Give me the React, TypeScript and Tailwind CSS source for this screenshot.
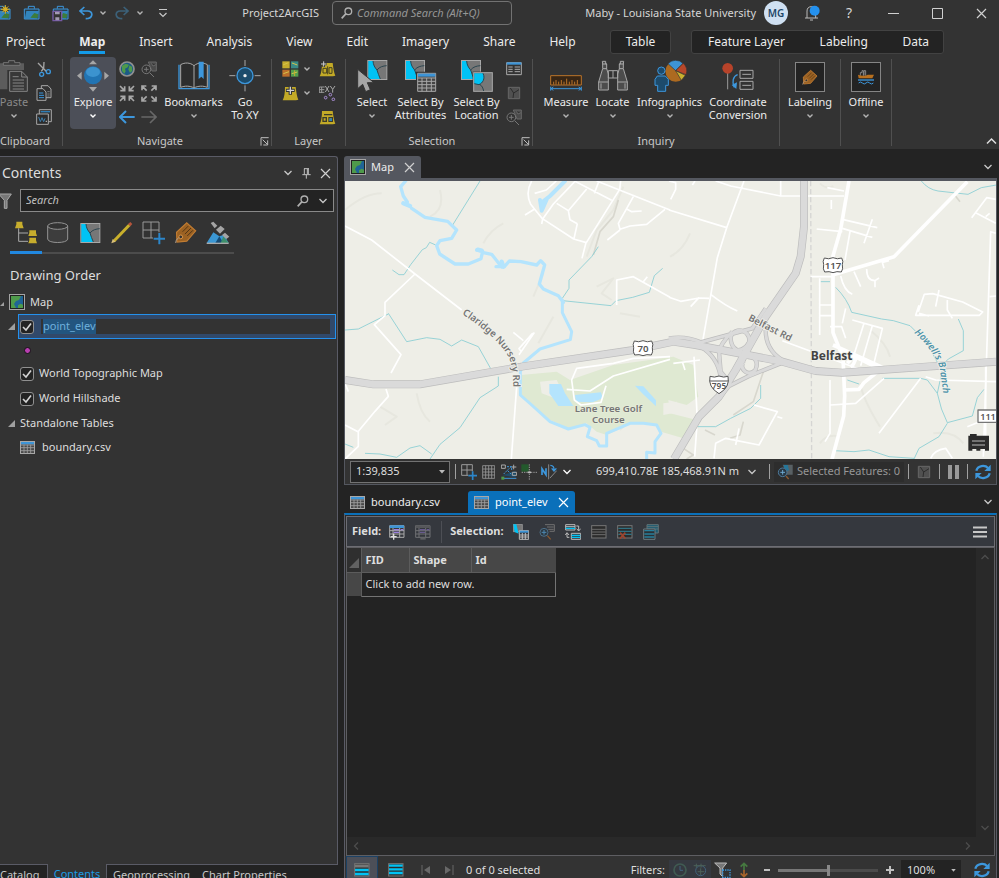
import { useEffect, useRef, type ReactNode } from "react";

type IconProps = { w: number; h: number; v: string; children: ReactNode; className?: string };

const Svg = ({ w, h, v, children, className = "" }: IconProps) => (
  <svg width={w} height={h} viewBox={v} fill="none" aria-hidden="true" className={"shrink-0 " + className}>
    {children}
  </svg>
);

const Chevron = ({ color = "#b4b4b4" }: { color?: string }) => (
  <Svg w={8} h={8} v="0 0 8 8">
    <path d="M1.5 2.5 4 5l2.5-2.5" stroke={color} strokeWidth="1.4" />
  </Svg>
);

const WideChevron = ({ color = "#c8c8c8" }: { color?: string }) => (
  <Svg w={10} h={10} v="0 0 10 10">
    <path d="m1.5 3 3.5 3.5L8.500 3" stroke={color} strokeWidth="1.3" />
  </Svg>
);

const Cross = ({ size = 11, color = "#d0d0d0" }: { size?: number; color?: string }) => (
  <Svg w={size} h={size} v="0 0 11 11">
    <path d="m1 1 9 9M10 1 1 10" stroke={color} strokeWidth="1.2" />
  </Svg>
);

const Magnifier = () => (
  <Svg w={12} h={12} v="0 0 36 36">
    <circle cx="22" cy="13" r="10" stroke="#b0b0b0" strokeWidth="4" />
    <path d="M15 20 2 34" stroke="#b0b0b0" strokeWidth="5" />
  </Svg>
);

const MapThumb = () => (
  <Svg w={16} h={16} v="0 0 48 48">
    <rect x="1.500" y="1.500" width="45" height="45" fill="#202020" stroke="#a5a5a5" strokeWidth="3" />
    <path d="M6 6h36v36H6z" fill="#1f6496" />
    <path d="M6 6h30l-6 12-9 3-6 9 6 12H6zM27 34l8-5 7 3v10H27z" fill="#4e9a4b" />
  </Svg>
);

const TableIcon = () => (
  <Svg w={15} h={13} v="0 0 45 39">
    <rect x="1.500" y="1.500" width="42" height="36" fill="#4a4a4a" stroke="#a8a8a8" strokeWidth="3" />
    <path d="M3 3h39v7H3z" fill="#3d94d6" />
    <path d="M3 12h39M3 20h39M3 29h39M12 11v26M22 11v26M32 11v26" stroke="#a0a0a0" strokeWidth="2.500" />
  </Svg>
);

const Refresh = () => (
  <Svg w={16} h={16} v="0 0 48 48">
    <path d="M4 20C8 4 30 2 39 12M44 28C40 44 18 46 9 36" stroke="#3d97dc" strokeWidth="7" />
    <path d="M47 2v19H28zM1 46V27h19z" fill="#3d97dc" />
  </Svg>
);

const SelectTile = () => (
  <>
    <rect x="1.500" y="1.500" width="57" height="57" fill="#777" stroke="#a8a8a8" strokeWidth="3" />
    <path d="M3 3h14c1 12 5 19 12 27 3 10 6 17 10 27H3z" fill="#00c3f5" />
    <path d="M17 3c1 12 5 19 12 27 3 10 6 17 10 27M29 30c8-10 18-12 29-13" stroke="#2c4650" strokeWidth="3" />
  </>
);

const RibbonPaste = () => (
  <Svg w={28} h={32} v="0 0 84 96">
    <path d="M0 10h72v20H0zM0 30h22v58H0z" fill="#5c5c5c" />
    <path d="M10 16V8h16V2h18v6h16v8z" fill="#3a3a3a" stroke="#757575" strokeWidth="3" />
    <path d="M29 34h36l17 17v43H29z" fill="#383838" stroke="#858585" strokeWidth="3" />
    <path d="M65 34v17h17M38 50h18M38 60h34M38 69h34M38 78h34M38 87h34" stroke="#858585" strokeWidth="3" />
  </Svg>
);

const Scissors = () => (
  <Svg w={16} h={16} v="0 0 48 48">
    <path d="m6 6 26 26M24 3l-1 18-7 10" stroke="#a5a5a5" strokeWidth="4" />
    <circle cx="37" cy="32" r="6" stroke="#3d97dc" strokeWidth="4" />
    <circle cx="17" cy="40" r="6" stroke="#3d97dc" strokeWidth="4" />
  </Svg>
);

const CopyIcon = () => (
  <Svg w={16} h={16} v="0 0 48 48">
    <path d="M16 2h20l9 10v26H16z" stroke="#a8a8a8" strokeWidth="3" />
    <path d="M3 11h18l9 10v25H3z" fill="#2c2c2c" stroke="#a8a8a8" strokeWidth="3" />
    <path d="M9 24h13M9 31h15M9 38h15" stroke="#3d97dc" strokeWidth="3" />
    <path d="M34 20h7M34 27h7M34 33h7" stroke="#a8a8a8" strokeWidth="2" />
  </Svg>
);

const CopyPath = () => (
  <Svg w={16} h={16} v="0 0 48 48">
    <path d="M10 2h36v36H10z" fill="#333" stroke="#a8a8a8" strokeWidth="3" />
    <path d="M14 8h28" stroke="#2d7eb8" strokeWidth="4" />
    <path d="M2 15h35v31H2z" fill="#2b2b2b" stroke="#a8a8a8" strokeWidth="3" />
    <path d="m8 24 5 14 5-12 5 12 4-10" stroke="#3d7fae" strokeWidth="3" />
    <path d="M29 37h4" stroke="#aaa" strokeWidth="4" />
  </Svg>
);

const ExploreIcon = () => (
  <Svg w={32} h={32} v="0 0 96 96">
    <circle cx="48" cy="46" r="27" fill="#2174b3" />
    <ellipse cx="48" cy="36" rx="21" ry="15" fill="#3c93cf" />
    <path d="M48 1 60 13H36zM48 95 36 81h24zM0 47l14-12v24zM96 47 82 35v24z" fill="#a6a6a6" />
  </Svg>
);

const Globe = () => (
  <Svg w={16} h={16} v="0 0 48 48">
    <circle cx="24" cy="24" r="21" fill="#1c5b86" stroke="#909090" strokeWidth="5" />
    <path d="M9 14 20 8l10 3-4 8-8 4 2 8-4 7-7-8zM31 13l8 4 1 13-7 5-5-9z" fill="#4e9a4b" />
  </Svg>
);

const ZoomSelection = () => (
  <Svg w={16} h={16} v="0 0 48 48">
    <path d="M22 3h24v27H33zM31 7l5 8 9-4" fill="#4b4b4b" stroke="#686868" strokeWidth="3" />
    <circle cx="16" cy="25" r="13" fill="#333" stroke="#777" strokeWidth="3" />
    <path d="M16 18v14M9 25h14M26 35l13 13" stroke="#777" strokeWidth="3" />
  </Svg>
);

const Corners = ({ out = false }: { out?: boolean }) => (
  <Svg w={16} h={17} v="0 0 48 51">
    {out ? (
      <path d="M3 16V3h13M4 4l13 13M45 16V3H32M44 4 31 17M3 35v13h13M4 47l13-13M45 35v13H32M44 47 31 34" stroke="#a8a8a8" strokeWidth="5" />
    ) : (
      <path d="M17 4v13H4M16 16 3 3M31 4v13h13M32 16 45 3M17 47V34H4M16 35 3 48M31 47V34h13M32 35l13 13" stroke="#a8a8a8" strokeWidth="5" />
    )}
  </Svg>
);

const Arrow = ({ right = false }: { right?: boolean }) => (
  <Svg w={16} h={16} v="0 0 48 48">
    {right ? (
      <path d="M1 24h44M27 6l18 18-18 18" stroke="#686868" strokeWidth="5" />
    ) : (
      <path d="M47 24H3M21 6 3 24l18 18" stroke="#3d97dc" strokeWidth="6" />
    )}
  </Svg>
);

const BookmarksIcon = () => (
  <Svg w={32} h={32} v="0 0 96 96">
    <path d="M3 14v72h90V14" stroke="#3d97dc" strokeWidth="4" />
    <path d="M8 14C20 7 36 7 48 17c12-10 28-10 40-3v68c-12-5-28-5-40 2-12-7-28-7-40-2zM48 17v66" fill="#2d2d2d" stroke="#aaa" strokeWidth="3" />
    <path d="M62 5h15v52l-7-7-8 7z" fill="#3d97dc" />
  </Svg>
);

const GoToIcon = () => (
  <Svg w={32} h={32} v="0 0 96 96">
    <circle cx="48" cy="47" r="24" fill="#1c4c6c" stroke="#3d97dc" strokeWidth="4" />
    <path d="M48 0v18M48 76v18M1 47h18M77 47h18" stroke="#a8a8a8" strokeWidth="3" />
    <circle cx="48" cy="47" r="5" fill="#eee" />
  </Svg>
);

const Basemap = () => (
  <Svg w={17} h={16} v="0 0 51 48">
    <path d="M1 1h22v21H1z" fill="#c7ad2d" />
    <path d="M27 1h22v21H27z" fill="#3b8b87" />
    <path d="M1 26h22v21H1z" fill="#bd6f2b" />
    <path d="M27 26h22v21H27z" fill="#539e4d" />
    <path d="m3 12 16-7M30 6l16 6M4 38l17-6M29 38l17-5" stroke="#d4c34c" strokeWidth="3" />
    <path d="M38 28v17" stroke="#c7ad2d" strokeWidth="3" />
  </Svg>
);

const YellowLayer = ({ kind }: { kind: "add" | "text" | "plain" }) => (
  <Svg w={17} h={16} v="0 0 51 48">
    <path d="M9 6h32c2 16 4 29 8 38L42 46H2C7 36 9 23 9 6z" fill="#c3aa27" />
    {kind === "add" && <path d="M25 3v26M12 16h26" stroke="#333" strokeWidth="10" />}
    {kind === "add" && <path d="M25 5v22M14 16h22" stroke="#d0d0d0" strokeWidth="4" />}
    {kind === "text" && <path d="M14 0v18M5 9h18" stroke="#333" strokeWidth="8" />}
    {kind === "text" && <path d="M14 1v16M6 9h16" stroke="#d0d0d0" strokeWidth="3" />}
    {kind === "text" && <path d="M12 22h11v14H12zM30 20h9v17h-9zM26 16v24" stroke="#45401f" strokeWidth="3" />}
    {kind === "plain" && <path d="M15 17h25M12 26h10v11H12zM30 26h10v11H30z" stroke="#3b3b2a" strokeWidth="4" />}
    {kind === "plain" && <path d="M31 28h8v8h-8z" fill="#2e83bc" />}
  </Svg>
);

const XYIcon = () => (
  <Svg w={17} h={16} v="0 0 51 48">
    <path d="M1 6h16M1 14h15M1 22h15M1 6v18M8 6v18" stroke="#989898" strokeWidth="3" />
    <path d="m19 3 11 18M30 3 19 21M34 3l7 10 7-10M41 13v10" stroke="#a8a8a8" strokeWidth="3" />
    <circle cx="20" cy="38" r="4" stroke="#a98dd4" strokeWidth="3" />
    <circle cx="34" cy="29" r="4" stroke="#a98dd4" strokeWidth="3" />
    <circle cx="43" cy="43" r="4" stroke="#a98dd4" strokeWidth="3" />
  </Svg>
);

const SelectIcon = () => (
  <Svg w={32} h={32} v="0 0 96 96">
    <g transform="translate(34 0)"><SelectTile /></g>
    <path d="M5 28v58l15-13 9 22 14-6-9-21h20z" fill="#a5a5a5" stroke="#333" strokeWidth="3" />
  </Svg>
);

const SelectAttributes = () => (
  <Svg w={32} h={32} v="0 0 96 96">
    <SelectTile />
    <path d="M36 38h58v58H36z" fill="#333" stroke="#333" strokeWidth="6" />
    <path d="M38 40h54v54H38zM38 54h54M38 64h54M38 74h54M38 84h54M51 54v40M65 54v40M79 54v40" fill="#444" stroke="#a8a8a8" strokeWidth="3" />
    <path d="M39 41h52v9H39z" fill="#3d94d6" />
  </Svg>
);

const SelectLocation = () => (
  <Svg w={32} h={32} v="0 0 96 96">
    <SelectTile />
    <rect x="35" y="35" width="61" height="61" fill="#333" />
    <rect x="38" y="38" width="56" height="56" fill="#777" stroke="#a8a8a8" strokeWidth="3" />
    <path d="M40 40h26c8 16-2 30-12 34l-14-3z" fill="#00c3f5" />
    <path d="M66 40c8 16-2 30-12 34l-14-3M56 73c7 4 10 11 12 20" stroke="#2c4650" strokeWidth="3" />
  </Svg>
);

const AttributeList = () => (
  <Svg w={16} h={16} v="0 0 48 48">
    <path d="M2 5h44v36H2z" stroke="#aaa" strokeWidth="3" />
    <path d="M2 4h44v7H2z" fill="#3d94d6" />
    <path d="M7 18h13M7 25h13M7 32h13M26 18h16M26 25h16M26 32h16" stroke="#aaa" strokeWidth="3" />
  </Svg>
);

const ClearTile = () => (
  <Svg w={16} h={16} v="0 0 48 48">
    <path d="M7 7h34v34H7z" fill="#505050" stroke="#666" strokeWidth="3" />
    <path d="m13 9 10 15 16-10M23 24l-2 15" stroke="#2c2c2c" strokeWidth="3" />
  </Svg>
);

const MeasureIcon = () => (
  <Svg w={32} h={32} v="0 0 96 96">
    <path d="M2 47h92v28H2z" fill="#382615" stroke="#b9732a" strokeWidth="3" />
    <path d="M11 74v-9M18 74V60M26 74v-9M34 74V60M42 74v-9M50 74V56M58 74v-9M66 74V60M74 74v-9M82 74V60" stroke="#b9732a" strokeWidth="3" />
    <path d="M2 80v12M94 80v12M3 86h90M3 86l7-5M3 86l7 5M93 86l-7-5M93 86l-7 5" stroke="#3d97dc" strokeWidth="3" />
  </Svg>
);

const Binoculars = () => (
  <Svg w={32} h={32} v="0 0 96 96">
    <path d="M16 4h10v8h3v14l5 16v48H5V66l12-40V12zM80 4H70v8h-3v14l-5 16v48h29V66L79 26V12z" fill="#4c4c4c" stroke="#a8a8a8" strokeWidth="3" />
    <path d="M16 12h14M18 26h12M66 12h14M66 26h12M5 66h29M62 66h29M34 32h28v22H34zM48 32v22M12 70v16M84 70v16" stroke="#a8a8a8" strokeWidth="3" />
  </Svg>
);

const Infographics = () => (
  <Svg w={34} h={32} v="0 0 102 96">
    <circle cx="68" cy="34" r="31" fill="#ad6a20" />
    <path d="M68 32 45 11A31 31 0 0 1 90 10z" fill="#3d94d6" stroke="#333" strokeWidth="2" />
    <path d="M68 32 91 10a31 31 0 0 1 8 34z" fill="#b7472a" stroke="#333" strokeWidth="2" />
    <path d="m68 32 29 14-12 15z" fill="#c8b02f" stroke="#333" strokeWidth="2" />
    <circle cx="25" cy="32" r="11" fill="#1d4b6c" stroke="#3d97dc" strokeWidth="3" />
    <path d="M13 48h24l9 10v18h-8v18H14V76H6V58z" fill="#1d4b6c" stroke="#3d97dc" strokeWidth="3" />
  </Svg>
);

const Coordinate = () => (
  <Svg w={32} h={32} v="0 0 96 96">
    <path d="M17 30v58" stroke="#999" strokeWidth="3" />
    <circle cx="17" cy="25" r="16" fill="#b7432a" />
    <path d="M47 44C33 48 29 66 37 82" stroke="#3d97dc" strokeWidth="4" />
    <path d="m29 75 14 12 2-20z" fill="#3d97dc" />
    <path d="M54 31h39v24H54zM54 64h39v24H54zM61 43h26M61 76h26" stroke="#a8a8a8" strokeWidth="3" />
  </Svg>
);

const Tag = () => (
  <>
    <path d="M26 4 45 21 26 43 5 45 4 24z" fill="#9c6223" stroke="#c17c32" strokeWidth="2.500" />
    <path d="m17 23 12-12M22 28l13-13M27 32l12-12" stroke="#4d3314" strokeWidth="2" />
    <path d="M2 47c1-8 5-11 10-12" stroke="#b0a090" strokeWidth="2" />
    <circle cx="13" cy="34" r="4" fill="#333" stroke="#e0994a" strokeWidth="2" />
  </>
);

const BoxedIcon = ({ children }: { children: ReactNode }) => (
  <span className="mt-0.5 flex h-[30px] w-[30px] shrink-0 items-center justify-center border border-[#858585] bg-[#232323]">
    <Svg w={16} h={16} v="0 0 48 48">{children}</Svg>
  </span>
);

type BigButtonProps = { icon: ReactNode; lines: string[]; width: string; menu?: boolean; active?: boolean; dim?: boolean };

const BigButton = ({ icon, lines, width, menu = false, active = false, dim = false }: BigButtonProps) => (
  <button
    type="button"
    className={
      "flex h-[72px] shrink-0 flex-col items-center rounded-sm pt-[3px] text-[11px] leading-[13px] whitespace-nowrap " +
      width + (active ? " bg-[#4c4f58]" : "") + (dim ? " text-[#8a8a8a]" : " text-[#ececec]")
    }
  >
    <span className="mb-[3px] flex h-8 shrink-0 items-start justify-center">{icon}</span>
    {lines.map((line) => (
      <span key={line}>{line}</span>
    ))}
    {menu && <span className="mt-1"><Chevron color={active ? "#fff" : "#b4b4b4"} /></span>}
  </button>
);

const SmallButton = ({ label, children }: { label: string; children: ReactNode }) => (
  <button type="button" aria-label={label} className="flex h-6 shrink-0 items-center gap-1">{children}</button>
);

const Group = ({ label, className, launcher = false, children }: { label: string; className: string; launcher?: boolean; children: ReactNode }) => (
  <section aria-label={label} className={"flex shrink-0 flex-col " + className}>
    <div className="flex h-[72px] items-start">{children}</div>
    <div className="mt-1 flex h-4 items-center text-[11px] leading-4 text-[#c8c8c8]">
      <span className="flex-1 text-center">{label}</span>
      {launcher && (
        <button type="button" aria-label={label + " options"} className="flex w-[14px] justify-end pr-0.5">
          <Svg w={9} h={9} v="0 0 27 27">
            <path d="M3 26V2h23M8 8l14 14M23 10v14H10" stroke="#bdbdbd" strokeWidth="3" />
          </Svg>
        </button>
      )}
    </div>
  </section>
);

const Divider = () => <span className="mt-0.5 h-[87px] w-px shrink-0 bg-[#505050]" />;

const Briefcase = ({ kind }: { kind: "new" | "open" | "save" }) => (
  <Svg w={17} h={17} v="0 0 51 51">
    <path d="M16 11V4h18v7" stroke="#3d97dc" strokeWidth="3" />
    <path d="M4 12h44v30H4z" fill="#263f50" stroke="#3d97dc" strokeWidth="3" />
    <path d="M10 18h38l-6 24H5z" fill="#3285bd" />
    <path d="m22 38 12-14 12 4-3 12z" fill="#3d7c3a" />
    {kind === "new" && <circle cx="34" cy="13" r="8" fill="#d5b02b" stroke="#3b2c10" strokeWidth="2" />}
    {kind === "new" && <path d="M34 0v26M21 13h26M25 4l18 18M43 4 25 22" stroke="#d5b02b" strokeWidth="3" />}
    {kind === "save" && <path d="M3 19h26v28H3z" fill="#333" stroke="#7559a3" strokeWidth="4" />}
    {kind === "save" && <path d="M9 20h14v8H9zM10 37h12v9H10z" fill="#a29ab3" />}
  </Svg>
);

const Undo = ({ redo = false }: { redo?: boolean }) => (
  <Svg w={14} h={14} v="0 0 42 42" className={redo ? "-scale-x-100" : ""}>
    <path d="M4 15h22c17 0 18 23-6 23M16 3 3 15l13 12" stroke={redo ? "#3c6179" : "#3d97dc"} strokeWidth="5" />
  </Svg>
);

const TitleBar = () => (
  <header className="flex h-7 shrink-0 items-start text-[11px] text-[#d6d6d6]">
    <div className="flex h-[26px] w-[332px] shrink-0 items-center">
      <span className="flex w-[11px] shrink-0 justify-end overflow-hidden"><Briefcase kind="new" /></span>
      <button type="button" aria-label="Open project" className="ml-3"><Briefcase kind="open" /></button>
      <button type="button" aria-label="Save project" className="ml-3"><Briefcase kind="save" /></button>
      <button type="button" aria-label="Undo" className="ml-[10px]"><Undo /></button>
      <button type="button" aria-label="Undo history" className="ml-[6px]"><Chevron /></button>
      <button type="button" aria-label="Redo" className="ml-2"><Undo redo /></button>
      <button type="button" aria-label="Redo history" className="ml-[7px]"><Chevron /></button>
      <button type="button" aria-label="Customize toolbar" className="ml-[14px]">
        <Svg w={10} h={10} v="0 0 10 10"><path d="M1 1.500h8M1.500 5 5 8.500 8.500 5" stroke="#c8c8c8" strokeWidth="1.200" /></Svg>
      </button>
      <h1 className="flex-1 pr-[13px] text-right">Project2ArcGIS</h1>
    </div>
    <label className="mt-px flex h-6 w-[180px] shrink-0 items-center gap-1 rounded-sm border border-[#727272] px-2">
      <Magnifier />
      <input aria-label="Command search" placeholder="Command Search (Alt+Q)" className="w-full bg-transparent text-[11px] italic outline-none placeholder:text-[#969696]" />
    </label>
    <div className="flex h-[26px] flex-1 items-center justify-end">
      <span className="whitespace-nowrap">Maby - Louisiana State University</span>
      <button type="button" aria-label="Account" className="ml-2 h-6 w-6 shrink-0 rounded-full bg-[#cfe0f2] text-[10px] font-semibold text-[#1c4568]">MG</button>
      <button type="button" aria-label="Notifications" className="ml-4">
        <Svg w={16} h={16} v="0 0 48 48">
          <path d="M3 39h39M9 39V18c0-8 5-13 13-13s13 5 13 13v21M18 45h9" stroke="#bbb" strokeWidth="3" />
          <circle cx="32" cy="17" r="15" fill="#2491ee" />
        </Svg>
      </button>
      <button type="button" aria-label="Help" className="ml-[22px] w-[14px] text-sm">?</button>
      <button type="button" aria-label="Minimize" className="ml-8"><Svg w={11} h={11} v="0 0 11 11"><path d="M0 5.500h11" stroke="#d0d0d0" /></Svg></button>
      <button type="button" aria-label="Maximize" className="ml-[33px]"><Svg w={11} h={11} v="0 0 11 11"><path d="M.5.500h10v10H.5z" stroke="#d0d0d0" /></Svg></button>
      <button type="button" aria-label="Close" className="mr-3 ml-[33px]"><Cross /></button>
    </div>
  </header>
);

const mainTabs = ["Project", "Map", "Insert", "Analysis", "View", "Edit", "Imagery", "Share", "Help"];

const RibbonTabs = () => (
  <nav className="flex h-7 shrink-0 items-center pl-[6px] text-xs text-[#ececec]">
    <div className="flex w-[604px] shrink-0 gap-[34px]">
      {mainTabs.map((t) =>
        t === "Map" ? (
          <button key={t} type="button" className="h-[23px] border-b-[3px] border-[#149be8] pt-0.5 font-bold">{t}</button>
        ) : (
          <button key={t} type="button" className="h-[23px]">{t}</button>
        )
      )}
    </div>
    <div className="flex h-6 w-[61px] shrink-0 items-center justify-center rounded-[3px] border border-[#424242] bg-[#232323]">
      <button type="button">Table</button>
    </div>
    <div className="ml-5 flex h-6 w-[253px] shrink-0 items-center justify-between rounded-[3px] border border-[#424242] bg-[#232323] pr-[14px] pl-4">
      <button type="button">Feature Layer</button>
      <button type="button">Labeling</button>
      <button type="button">Data</button>
    </div>
  </nav>
);

const Ribbon = () => (
  <div className="flex h-[93px] shrink-0 pt-px">
    <Group label="Clipboard" className="w-[50px]">
      <BigButton icon={<RibbonPaste />} lines={["Paste"]} width="w-7" menu dim />
      <div className="ml-2 flex flex-col">
        <SmallButton label="Cut"><Scissors /></SmallButton>
        <SmallButton label="Copy"><CopyIcon /></SmallButton>
        <SmallButton label="Copy path"><CopyPath /></SmallButton>
      </div>
    </Group>
    <span className="w-3 shrink-0" />
    <Divider />
    <Group label="Navigate" className="w-[208px]" launcher>
      <span className="w-[7px]" />
      <BigButton icon={<ExploreIcon />} lines={["Explore"]} width="w-[46px]" menu active />
      <div className="ml-[3px] grid grid-cols-2 gap-x-1.5">
        <SmallButton label="Full extent"><Globe /></SmallButton>
        <SmallButton label="Zoom to selection"><ZoomSelection /></SmallButton>
        <SmallButton label="Fixed zoom in"><Corners /></SmallButton>
        <SmallButton label="Fixed zoom out"><Corners out /></SmallButton>
        <SmallButton label="Previous extent"><Arrow /></SmallButton>
        <SmallButton label="Next extent"><Arrow right /></SmallButton>
      </div>
      <span className="w-1" />
      <BigButton icon={<BookmarksIcon />} lines={["Bookmarks"]} width="w-[65px]" menu />
      <BigButton icon={<GoToIcon />} lines={["Go", "To XY"]} width="w-[38px]" />
    </Group>
    <Divider />
    <Group label="Layer" className="w-[73px]">
      <div className="ml-[10px] flex flex-col">
        <SmallButton label="Basemap"><Basemap /><Chevron /></SmallButton>
        <SmallButton label="Add data"><YellowLayer kind="add" /><Chevron /></SmallButton>
      </div>
      <div className="ml-2 flex flex-col">
        <SmallButton label="Add graphics layer"><YellowLayer kind="text" /></SmallButton>
        <SmallButton label="Add XY data"><XYIcon /></SmallButton>
        <SmallButton label="Add preset"><YellowLayer kind="plain" /></SmallButton>
      </div>
    </Group>
    <Divider />
    <Group label="Selection" className="w-[186px]" launcher>
      <span className="w-1" />
      <BigButton icon={<SelectIcon />} lines={["Select"]} width="w-11" menu />
      <BigButton icon={<SelectAttributes />} lines={["Select By", "Attributes"]} width="w-[53px]" />
      <BigButton icon={<SelectLocation />} lines={["Select By", "Location"]} width="w-[59px]" />
      <div className="flex flex-col">
        <SmallButton label="Attributes"><AttributeList /></SmallButton>
        <SmallButton label="Clear"><ClearTile /></SmallButton>
        <SmallButton label="Zoom to selected"><ZoomSelection /></SmallButton>
      </div>
    </Group>
    <Divider />
    <Group label="Inquiry" className="w-[246px]">
      <span className="w-[10px]" />
      <BigButton icon={<MeasureIcon />} lines={["Measure"]} width="w-[46px]" menu />
      <BigButton icon={<Binoculars />} lines={["Locate"]} width="w-[47px]" menu />
      <BigButton icon={<Infographics />} lines={["Infographics"]} width="w-[67px]" menu />
      <BigButton icon={<Coordinate />} lines={["Coordinate", "Conversion"]} width="w-[70px]" />
    </Group>
    <Divider />
    <div className="flex w-[60px] shrink-0 justify-center">
      <BigButton icon={<BoxedIcon><Tag /></BoxedIcon>} lines={["Labeling"]} width="w-[48px]" menu />
    </div>
    <Divider />
    <div className="flex w-[50px] shrink-0 justify-center">
      <BigButton
        icon={
          <BoxedIcon>
            <path d="M7 20v-9h5V5h4v15M18 20V5h5v15" stroke="#999" strokeWidth="2.500" />
            <path d="M0 17c10 4 22 4 29 0h19l-5 11H2z" fill="#b8701f" />
            <path d="M0 33h48" stroke="#3d97dc" strokeWidth="4" />
            <path d="M2 42q5-6 11 0t11 0 11 0 11 0" stroke="#3d97dc" strokeWidth="3" />
          </BoxedIcon>
        }
        lines={["Offline"]}
        width="w-[44px]"
        menu
      />
    </div>
    <Divider />
    <button type="button" aria-label="Collapse ribbon" className="mt-auto mr-0.5 mb-0.5 ml-auto">
      <Svg w={11} h={11} v="0 0 11 11"><path d="M1 7.500 5.500 3 10 7.500" stroke="#ddd" strokeWidth="1.500" /></Svg>
    </button>
  </div>
);

const contentTools: { label: string; icon: ReactNode }[] = [
  {
    label: "List by drawing order",
    icon: (
      <>
        <path d="M7 2h18v8l4 12H3l4-12zM46 28h20v8l3 9H43l3-9zM46 50h20v8l3 9H43l3-9z" fill="#c7ad2d" />
        <path d="M14 22v39h28M14 36h28" stroke="#aaa" strokeWidth="3" />
      </>
    ),
  },
  {
    label: "List by data source",
    icon: (
      <>
        <path d="M5 15v39c0 14 60 14 60 0V15" fill="#3d3d3d" stroke="#939393" strokeWidth="3" />
        <ellipse cx="35" cy="15" rx="30" ry="10" fill="#333" stroke="#939393" strokeWidth="3" />
      </>
    ),
  },
  { label: "List by selection", icon: <g transform="translate(7 6)"><SelectTile /></g> },
  {
    label: "List by editing",
    icon: (
      <>
        <path d="M12 60 58 12" stroke="#c9b02c" strokeWidth="9" />
        <path d="M4 67 8 54l9 8z" fill="#d9c07a" />
        <path d="m54 9 7-6 6 6-6 7z" fill="#b5543c" />
      </>
    ),
  },
  {
    label: "List by snapping",
    icon: (
      <>
        <path d="M3 3h48v48H3zM27 3v48M3 27h48" stroke="#999" strokeWidth="3" />
        <path d="M33 53h38M52 34v36" stroke="#333" strokeWidth="14" />
        <path d="M35 53h34M52 36v34" stroke="#2c86ca" strokeWidth="6" />
      </>
    ),
  },
  { label: "List by labeling", icon: <g transform="translate(2 0) scale(1.4)"><Tag /></g> },
  {
    label: "List by perception",
    icon: (
      <>
        <path d="m2 66 20-32 18 12 14-5 14 25z" fill="#3b97d3" />
        <path d="m28 66 12-20 12 20z" fill="#164b75" />
        <path d="m44 66 8-20 16 20z" fill="#3e8f6b" />
        <path d="m14 6 8-4 12 12-8 8zM30 26l14-12 12 10-14 14zM48 42l9-7 13 12-9 7z" fill="#a5a5a5" />
        <path d="M2 67h66" stroke="#aaa" strokeWidth="4" />
      </>
    ),
  },
];

const Expander = () => (
  <Svg w={7} h={7} v="0 0 7 7"><path d="M7 0v7H0z" fill="#a0a0a0" /></Svg>
);

const LayerCheck = ({ label }: { label: string }) => (
  <span className="grid h-[14px] w-[14px] shrink-0 place-items-center">
    <input
      type="checkbox"
      defaultChecked
      aria-label={label}
      className="col-start-1 row-start-1 h-[14px] w-[14px] appearance-none rounded-[3px] border border-[#909090] bg-[#232323]"
    />
    <Svg w={10} h={10} v="0 0 10 10" className="pointer-events-none col-start-1 row-start-1">
      <path d="m1 5 3 3 5-6.500" stroke="#d4d4d4" strokeWidth="1.600" />
    </Svg>
  </span>
);

const ContentsPane = () => {
  const nameBox = useRef<HTMLInputElement>(null);
  useEffect(() => {
    nameBox.current?.focus();
    nameBox.current?.select();
  }, []);

  return (
    <aside className="flex w-[338px] shrink-0 flex-col text-[11px] text-[#dedede]">
      <div className="flex min-h-0 flex-1 flex-col rounded-tr-[3px] border-t border-r border-[#5a5b66] bg-[#333]">
        <div className="flex h-8 items-center pr-[6px] pl-0.5">
          <h2 className="flex-1 text-sm">Contents</h2>
          <button type="button" aria-label="Pane menu"><WideChevron /></button>
          <button type="button" aria-label="Auto hide" className="ml-2">
            <Svg w={11} h={11} v="0 0 33 33"><path d="M9 2h15M10 2v17M22 2v17M4 20h25M16 20v12M19 3v15" stroke="#c0c0c0" strokeWidth="3" /></Svg>
          </button>
          <button type="button" aria-label="Close pane" className="ml-2"><Cross /></button>
        </div>
        <div className="flex h-[23px] items-center pr-[3px]">
          <Svg w={12} h={16} v="0 0 36 48"><path d="M-4 3h38L21 22v24h-8V22z" fill="#777" stroke="#aaa" strokeWidth="3" /></Svg>
          <label className="ml-2 flex h-[23px] flex-1 items-center border border-[#8a8a8a] bg-[#232323] px-[5px]">
            <input aria-label="Search contents" placeholder="Search" className="min-w-0 flex-1 bg-transparent text-[11px] italic outline-none placeholder:text-[#c0c0c0]" />
            <Magnifier />
            <span className="ml-[9px]"><WideChevron /></span>
          </label>
        </div>
        <div className="mt-2 ml-[10px] flex w-[224px] border-b-2 border-[#4c4c4c]">
          {contentTools.map((t, i) => (
            <button
              key={t.label}
              type="button"
              aria-label={t.label}
              className={"-mb-0.5 flex h-[34px] w-8 items-start justify-center border-b-[3px] pt-px " + (i === 0 ? "border-[#2188e0]" : "border-transparent")}
            >
              <Svg w={24} h={24} v="0 0 72 72">{t.icon}</Svg>
            </button>
          ))}
        </div>
        <h3 className="mt-[10px] h-[22px] pl-[10px] text-[13px] leading-[22px]">Drawing Order</h3>
        <ul className="mt-1">
          <li className="flex h-6 items-center gap-[5px]"><span className="w-1 overflow-hidden"><Expander /></span><MapThumb /><span>Map</span></li>
          <li className="flex h-[25px] items-center gap-[3px] pl-2">
            <Expander />
            <span className="mr-px flex h-[25px] flex-1 items-center gap-[7px] border border-[#2491ee] bg-[#31496a] pr-[5px] pl-px">
              <LayerCheck label="point_elev visibility" />
              <input
                ref={nameBox}
                aria-label="Layer name"
                defaultValue="point_elev"
                className="h-[15px] min-w-0 flex-1 bg-[#333] pl-0.5 text-[11px] text-[#dedede] outline-none selection:bg-[#22557f] selection:text-[#6fb0dc]"
              />
            </span>
          </li>
          <li className="flex h-[22px] items-center pl-6"><span className="h-[7px] w-[7px] rounded-full border border-[#111] bg-[#b83fb0]" /></li>
          {["World Topographic Map", "World Hillshade"].map((name) => (
            <li key={name} className="flex h-[25px] items-center gap-[5px] pl-5"><LayerCheck label={name + " visibility"} /><span>{name}</span></li>
          ))}
          <li className="flex h-6 items-center gap-[5px] pl-2"><Expander /><span>Standalone Tables</span></li>
          <li className="flex h-[25px] items-center gap-[7px] pl-5"><TableIcon /><span>boundary.csv</span></li>
        </ul>
      </div>
      <div className="flex h-[14px] shrink-0 overflow-hidden bg-[#232323] leading-[18px] text-[#c8c8c8]">
        <button type="button" className="h-5 w-12 border-t border-r border-[#5a5b66] text-left">Catalog</button>
        <button type="button" className="h-5 w-[58px] bg-[#333] text-[#1b9be5]">Contents</button>
        <span className="flex h-5 flex-1 gap-3 border-t border-l border-[#5a5b66] pl-1.5">
          <button type="button">Geoprocessing</button>
          <button type="button">Chart Properties</button>
        </span>
      </div>
    </aside>
  );
};

const UsShield = ({ x, y, n }: { x: number; y: number; n: string }) => (
  <g transform={`translate(${x} ${y})`}>
    <path d="M-26-22q13 5 26-1 13 6 26 1 6 10 2 20 3 14-3 22-14-3-25 2-11-5-25-2-6-8-3-22-4-10 2-20z" fill="#fff" stroke="#555" strokeWidth="3" />
    <text y="10" textAnchor="middle" fontSize="29" fontWeight="600" fill="#555">{n}</text>
  </g>
);

const MapView = () => (
  <svg viewBox="15 93 1953 834" preserveAspectRatio="xMidYMid slice" role="img" aria-label="Topographic map" className="block aspect-[651/278] w-full bg-[#eeeee7]" fill="none" strokeLinejoin="round">
    <g stroke="#e7e7df" strokeWidth="6">
      <path d="M15 180q60-50 110-50M300 120q15 60-30 80M430 280q20-40 60-60M580 440l30-70M770 410l50-25-35 45 30 20M850 110l-30 70-50 60-30 80" />
      <path d="M120 770l50 30-35 25M230 730q10 60 40 85M640 500l-45 80M840 490l60 10M1050 250q-20 50-60 70M850 750q30 60-10 90M1590 540q50 40 60 80" />
      <path d="M1780 850q60-10 90 30M1440 100q20 20 40 8M1560 700q10 50 60 130M1440 880q20-30 60-20" />
    </g>
    <g stroke="#d8d7ce" strokeWidth="5">
      <path d="M835 150l-15 50-40 45-20 70M1270 665l-30 90-60 40M1210 815l-10 40-30 10M1095 840l30 15M1030 895l30 20-20 12M1840 130l20 25" />
    </g>

    <g transform="translate(0 450)">
      <path d="M542 225 650 215l40 25 130-45 180-25 60 25 15 95-35 25-55-15 5 40 80 20 5 25-45 30-67-20-18-23h-75l-70 33-30-10-30-25-55 15-55-25-90-75z" fill="#dfe9d2" />
      <path d="m600 245 50-5 15 30-20 25-40-15zM970 310l40-5 10 30-50 10z" fill="#eeeee7" />
      <path d="M628 252h35l12 28 25 38h-45l-27-38zM705 285l78-8 5 18-30 12-50-2zM885 257l25 2 38 42v18l-40-38z" fill="#b4e4fd" />
    </g>

    <g stroke="#86cdd2" strokeWidth="2.500">
      <path d="M420 93 338 225M157 360l20 14h15l20-30 35-45 12-6 10-16 18 8M775 290l-20 30-68 70v25l-20 30M668 452l145 15 15-15 50-10 50-15 15-50 25-22M15 540l40-3 90-45M145 490l55 85 60-12 40 5 35 20 30-18 50 20 45 80M475 680v28l-55 35-60 90-60 50-30 44M15 882l25 10M75 910l45 2 50 10 40-28 30-7 35 25" />
      <path transform="translate(987 0)" d="M757 93q20 25 50 30l90 10 40-20 45-8M455 395h28M500 412q35 35 48 75l90 20 35 5 50 15 50 50 40 75 25-25 45-25v-60l-15-35M820 660l-15 70q10 50 30 88l75-20 15-55 20-25M805 730l-30-40-20-5H640M835 820l-25 40-60 35-15 32M495 902l60 3 45-5 60 20 75 5M275 705v40l-30 30-60 30-45 25H80M535 690l35 12" />
    </g>

    <g stroke="#b4e4fd" strokeLinecap="round">
      <path strokeWidth="10" d="m197 93-15 17 8 28 12 18M215 175l40 27 68 12 27 26-15 25-35 7-10 15 9 25 46 30h40l38-16 5-22-18-4M430 308l25 5 30 38M468 350h25l15-17 35 2 47 10 12-13 12 13-16 57 12 15 45 20 15 20" />
      <path strokeWidth="13" d="m190 160 20 8M425 302l-12-3M485 335l5 15" />
      <path strokeWidth="9" d="M667 450v38l28 57-4 24-91 28-50 42-9 26v70l34 30 55 50 55 22 50-13 15 8-8 28 28 12 8 16h22v-38l70-30h40l40 5 13 25-18 25v34l-25-2v20" />
      <path strokeWidth="12" d="m675 93-45 45-25 20v24l15-34M600 150l5 30" />
    </g>

    <g stroke="#fff" strokeWidth="5">
      <path d="m15 228 80 42 130 102 140 108M225 372l-90 85v40l-32 27 80 90-30 55M138 717l7 22-40 45-50 60v45L15 927M15 825l42 22M15 700l10 25M530 710l-16 217" />
      <path d="M575 93q-20 35-3 70l12 15 22 27 95 62 38 11 100-160 3-25M555 195l29-18M584 130l35-10 30-27M605 222l3-15 32-45 65-68 110 57M740 117l-55 65 5 27 22 12M650 160l35 22M712 221l-10 45M777 93l-14 37M738 278l-12 47M770 93l220 87M880 140l-45 80 5 18 30-10 50-5 55-45M860 177l15 8 30-2M840 240l-38 30M830 465v-75l50-10 110 62M910 395l12-15" />
      <path d="M990 620l-110 5-60 15-110 15-15 35 8 60 20 15 60-8 15-50M680 718l70 5 70-45 170-50M545 606l-8-10 40-45 5-2-45 65M520 547l30 25M1000 640l80-10M1035 660l-8-25" />
      <path transform="translate(987 0)" d="M0 93l20 5v20l-15 30M70 105l8-12M140 93l45 15 150 30h190M0 180l173 53M225 93l-52 140-28 90-45 257M335 93v45M475 113l50 10M487 150v27M443 237l77 8M520 208l105 25M610 208l-25 72M520 235l90 27M543 245l-15 85M0 442l35 12 55-10 30 1M65 470l25-27M125 433q45 35 80 50M425 380h65M452 385v170M452 465h40M452 497h40M515 378q10 45 35 55M555 365l20 45M593 357q0 35 25 35v20M645 355l-5-18 20-5M618 392l12-8M908 203l45-60 27 5M950 200l12-10M920 188l60 32M980 250l-15-5-22 675M962 440l30-3M748 485l18-52 25-2 90 25 60 30-10 10H740l10-30M750 490l30 8M800 470l10-50M835 450v30l15 25M340 572l270 100M530 565l-12-35h-35M550 510l90 25-30 125M585 520l-35 110M610 527l-35 120M530 475l-10 45" />
      <path transform="translate(987 450)" d="M75 170l10 190-8 110M255 315l70 20-55 100-100-20-30 15-5 45M210 385l-10 50M325 350l15 5M483 240v160l-15 25M485 315l75-5 85-75M755 235 630 400M770 230l30 10 185 5M895 380l50-20h35M785 475q10-25 45-30l20 30M950 200v220" />
    </g>
    <g stroke="#fff" strokeWidth="11">
      <path transform="translate(987 0)" d="m540 93-25 145-23 80v230l30 75 5 115-3 60-35 130M490 375l185-55 220-225M492 585l155 70M525 720l45-2 15-20 50-40-80-40-20 22M560 625q-5 20-15 25" />
    </g>

    <path transform="translate(987 0)" d="M425 93l3 834" stroke="#d5d5d3" strokeWidth="4" strokeDasharray="16 8" />

    <g strokeLinecap="butt">
      <g stroke="#bcbcbc">
        <path transform="translate(987 450)" strokeWidth="13" d="M0 115q50-8 95 12L250 85l40-60M185 110a27 27 0 1 1 54 20q-15 22-35 20-20-10-19-40M150 155q5-25 40-60M150 155l5 60 25 30M95 140q50 30 60 90v60M222 190q0-25 25-20 25 12 12 40-15 15-30 5-15-12-7-25M290 90q0 60 50 90M340 188l-100 40-60 30-40 50" />
        <path strokeWidth="24" d="m15 690 85 13h140l305-53 335-50 120-25 67 10 260 50 100 28 80 5 461-33" />
        <path transform="translate(987 0)" strokeWidth="24" d="M405 93v137l-10 90-15 50-90 130-90 160-50 80-60 60-75 127" />
      </g>
      <g stroke="#dadada">
        <path transform="translate(987 450)" strokeWidth="9" d="M0 115q50-8 95 12L250 85l40-60M185 110a27 27 0 1 1 54 20q-15 22-35 20-20-10-19-40M150 155q5-25 40-60M150 155l5 60 25 30M95 140q50 30 60 90v60M222 190q0-25 25-20 25 12 12 40-15 15-30 5-15-12-7-25M290 90q0 60 50 90M340 188l-100 40-60 30-40 50" />
        <path strokeWidth="20" d="m15 690 85 13h140l305-53 335-50 120-25 67 10 260 50 100 28 80 5 461-33" />
        <path transform="translate(987 0)" strokeWidth="20" d="M405 93v137l-10 90-15 50-90 130-90 160-50 80-60 60-75 127" />
      </g>
    </g>

    <defs>
      <path id="claridge" d="M366 492Q470 560 505 620Q524 660 518 740" />
      <path id="howell" d="M1722 548Q1790 610 1800 660L1814 760" />
    </defs>
    <g stroke="#f2f2ec" strokeWidth="5" paintOrder="stroke" fill="#757575" fontWeight="600" fontSize="29">
      <text><textPath href="#claridge">Claridge Nursery Rd</textPath></text>
      <text fill="#4e93a9" fontStyle="italic" fontSize="29"><textPath href="#howell">Howell’s Branch</textPath></text>
      <text transform="translate(1223 510) rotate(27)">Belfast Rd</text>
      <text textAnchor="middle" x="805" y="785" stroke="#e6ecd9">Lane Tree Golf</text>
      <text textAnchor="middle" x="805" y="819" stroke="#e6ecd9">Course</text>
      <text textAnchor="middle" x="1475" y="630" fontSize="36" fontWeight="700" fill="#444">Belfast</text>
    </g>
    <UsShield x={909} y={595} n="70" />
    <UsShield x={1479} y={346} n="117" />
    <g transform="translate(1137 702)">
      <path d="M-27-23q13 5 27-1 14 6 27 1 7 32-27 52-34-20-27-52z" fill="#fff" stroke="#555" strokeWidth="3" />
      <path d="M-28-9h56" stroke="#555" strokeWidth="3" />
      <text y="15" textAnchor="middle" fontSize="25" fontWeight="600" fill="#555">795</text>
    </g>
    <path d="M1914 780h70v37h-70z" fill="#fff" stroke="#777" strokeWidth="4" />
    <text x="1921" y="809" fontSize="27" fontWeight="600" fill="#555">111</text>
    <path d="M1885 857h5v-5h20v5h37v45h-12v-5h-14v5h-12v-5h-12v5h-12z" fill="#2b2b2b" />
    <path d="M1896 873h39M1896 885h39" stroke="#d5d5d5" strokeWidth="2.500" />
  </svg>
);

const Sep = () => <span className="h-[15px] w-px shrink-0 bg-[#a0a0a0]" />;

const MapStatus = () => (
  <div className="flex h-[25px] items-center bg-[#333] pr-[5px] pl-[5px] text-[11px] text-[#dedede]">
    <span className="flex h-[22px] w-[100px] shrink-0 items-center border border-[#727272] bg-[#232323] pr-1">
      <select aria-label="Map scale" className="min-w-0 flex-1 appearance-none bg-transparent pl-[5px] outline-none">
        <option>1:39,835</option>
      </select>
      <Svg w={6} h={4} v="0 0 6 4"><path d="M0 0h6L3 3.500z" fill="#bbb" /></Svg>
    </span>
    <span className="ml-[5px] flex flex-1 items-center gap-1">
      <Sep />
      <button type="button" aria-label="Snapping" className="ml-px">
        <Svg w={16} h={16} v="0 0 48 48">
          <path d="M2 2h32v32H2zM18 2v32M2 18h32" stroke="#999" strokeWidth="3" />
          <path d="M22 35h26M35 22v26" stroke="#333" strokeWidth="10" />
          <path d="M22 35h26M35 22v26" stroke="#2c86ca" strokeWidth="5" />
        </Svg>
      </button>
      <button type="button" aria-label="Grid" className="ml-px">
        <Svg w={13} h={14} v="0 0 39 42"><path d="M2 2h36v38H2zM11 2v38M20 2v38M29 2v38M2 12h36M2 21h36M2 30h36" stroke="#999" strokeWidth="2.500" /></Svg>
      </button>
      <button type="button" aria-label="Constraints" className="ml-0.5">
        <Svg w={16} h={16} v="0 0 48 48">
          <path d="m4 34 40-14v20z" fill="#1e4c6a" />
          <path d="M1 3h12v10H1zM34 25h13v9H34zM38 2v14M31 9h15" stroke="#aaa" strokeWidth="3" />
          <path d="m8 30 22-22M18 8h14v12M20 20l10 10" stroke="#3d97dc" strokeWidth="3" strokeDasharray="6 3" />
          <path d="M6 43h40" stroke="#3d97dc" strokeWidth="3" />
          <path d="M1 38h9v9H1z" fill="#4e9a4b" />
        </Svg>
      </button>
      <button type="button" aria-label="Dynamic constraints">
        <Svg w={16} h={16} v="0 0 48 48">
          <path d="M1 1h22v22H1z" fill="#23592c" />
          <path d="M25 1v46M2 25h46" stroke="#999" strokeWidth="3" strokeDasharray="4 3" />
          <path d="M20 25h10" stroke="#bbb" strokeWidth="5" />
        </Svg>
      </button>
      <button type="button" aria-label="Inference">
        <Svg w={16} h={16} v="0 0 48 48">
          <path d="M3 33V14l12 18V13" stroke="#3d97dc" strokeWidth="5" />
          <path d="M23 1v45M27 42l20-22" stroke="#999" strokeWidth="2.500" />
          <path d="M28 4q12 0 11 15M32 13l7 8 7-8" stroke="#3d97dc" strokeWidth="4" />
        </Svg>
      </button>
      <button type="button" aria-label="More tools" className="ml-px"><WideChevron color="#fff" /></button>
      <span className="ml-1"><Sep /></span>
      <span className="ml-3 whitespace-nowrap">699,410.78E 185,468.91N m</span>
      <button type="button" aria-label="Coordinate units" className="ml-auto pr-3"><WideChevron /></button>
    </span>
    <Sep />
    <span className="mx-1 flex h-5 w-[130px] shrink-0 items-center gap-1 bg-[#2d2d2d] pl-[3px] whitespace-nowrap text-[#969696]">
      <Svg w={16} h={16} v="0 0 48 48">
        <path d="M17 2h30v30H30z" fill="#586064" />
        <path d="M20 3h12l4 16-12 4z" fill="#24769a" />
        <circle cx="17" cy="25" r="13" fill="#283844" stroke="#4e7898" strokeWidth="3" />
        <path d="M17 18v14M10 25h14" stroke="#6ca8d0" strokeWidth="3" />
        <path d="m27 36 8 9" stroke="#8c5a30" strokeWidth="4" />
      </Svg>
      <span>Selected Features: 0</span>
    </span>
    <span className="flex items-center gap-[7px]">
      <Sep />
      <button type="button" aria-label="Clear selection"><ClearTile /></button>
      <Sep />
      <button type="button" aria-label="Pause drawing" className="flex gap-[3px] px-px"><i className="h-[14px] w-1 bg-[#999]" /><i className="h-[14px] w-1 bg-[#999]" /></button>
      <Sep />
      <button type="button" aria-label="Refresh map"><Refresh /></button>
    </span>
  </div>
);

const RowsIcon = ({ kind }: { kind: "plain" | "delete" | "copy" | "all" | "selected" }) => (
  <Svg w={16} h={16} v="0 0 48 48">
    {kind === "copy" && <path d="M12 2h34v25H12zM12 8h34M12 15h34" fill="#1d5b70" stroke="#5f7378" strokeWidth="3" />}
    {kind === "copy" && <path d="M2 15h34v31H2z" fill="#2b3135" stroke="#6b7b80" strokeWidth="3" />}
    {kind === "copy" && <path d="M4 20h30M4 30h30M4 39h30" stroke="#277f9c" strokeWidth="4" />}
    {kind !== "copy" && <rect x="2" y="5" width="43" height="37" fill="#2c2c2c" stroke="#777" strokeWidth="3" />}
    {kind === "plain" && <path d="M3 16h41M3 24h41M3 32h41" stroke="#6c6c6c" strokeWidth="3" />}
    {kind === "delete" && <path d="M4 13h40M4 22h40M4 31h40" stroke="#2f7182" strokeWidth="4" />}
    {kind === "delete" && <path d="m9 26 16 18M25 26 9 44" stroke="#9c452f" strokeWidth="5" />}
    {kind === "all" && <path d="M3 12h41" stroke="#777" strokeWidth="9" />}
    {kind === "all" && <path d="M3 24h41M3 36h41" stroke="#00c3f5" strokeWidth="7" />}
    {kind === "selected" && <path d="M3 11h41M3 22h41M3 33h41" stroke="#00c3f5" strokeWidth="7" />}
  </Svg>
);

const FieldIcon = ({ add = false }: { add?: boolean }) => (
  <Svg w={16} h={16} v="0 0 48 48" className={add ? "" : "opacity-50"}>
    <path d="M2 5h43v35H2zM2 20h43M2 30h43M12 12v28M32 12v28" fill="#34373d" stroke="#aaa" strokeWidth="3" />
    <path d="M2 4h43v8H2z" fill={add ? "#3d94d6" : "#777"} />
    <path d="M14 15h16v4H14zM14 23h16v4H14zM35 15h8v4h-8z" fill="#9c7fe0" />
    {add ? <path d="M14 29v18M5 38h18" stroke="#ddd" strokeWidth="4" /> : <path d="M16 41h16v6H16z" fill="#888" />}
  </Svg>
);

const TableToolbar = () => (
  <div className="mx-px mt-px flex h-[31px] items-center gap-[10px] border border-[#6d6d73] bg-[#35383e] pr-[7px] pl-[5px] text-[11px] text-[#dedede]">
    <span className="-mr-0.5 font-bold">Field:</span>
    <button type="button" aria-label="Add field"><FieldIcon add /></button>
    <button type="button" aria-label="Calculate field"><FieldIcon /></button>
    <span className="h-[22px] w-px bg-[#4d4f55]" />
    <span className="-ml-0.5 font-bold -mr-px">Selection:</span>
    <button type="button" aria-label="Select by attributes">
      <Svg w={16} h={16} v="0 0 48 48">
        <path d="M1 1h27v22H1z" fill="#777" stroke="#aaa" strokeWidth="2" />
        <path d="M1 1h9l7 28-12-5z" fill="#00c3f5" />
        <path d="M19 20h28v26H19zM19 33h28M19 39h28M28 27v19M37 27v19" fill="#34373d" stroke="#bbb" strokeWidth="3" />
        <path d="M20 20h26v6H20z" fill="#3d94d6" />
      </Svg>
    </button>
    <button type="button" aria-label="Zoom to selection">
      <Svg w={16} h={16} v="0 0 48 48">
        <path d="M18 2h28v20H32M24 9h20M28 16h16" stroke="#707070" strokeWidth="3" />
        <circle cx="15" cy="25" r="12" fill="#2d3942" stroke="#4d6f88" strokeWidth="3" />
        <path d="M15 18v14M8 25h14" stroke="#4d8ab4" strokeWidth="3" />
        <path d="m25 35 10 11" stroke="#8b5930" strokeWidth="4" />
      </Svg>
    </button>
    <button type="button" aria-label="Switch selection">
      <Svg w={16} h={16} v="0 0 48 48">
        <path d="M2 2h28v16H2zM2 8h28M19 28h28v18H19z" stroke="#bbb" strokeWidth="3" />
        <path d="M2 13h28M20 34h26M20 40h26" stroke="#00c3f5" strokeWidth="4" />
        <path d="M34 6h7v14M35 14l6 7 6-7M13 40H6V27M1 33l5-7 6 7" stroke="#bbb" strokeWidth="3" />
      </Svg>
    </button>
    <button type="button" aria-label="Clear selection"><RowsIcon kind="plain" /></button>
    <button type="button" aria-label="Delete selection"><RowsIcon kind="delete" /></button>
    <button type="button" aria-label="Copy selection"><RowsIcon kind="copy" /></button>
    <button type="button" aria-label="Table menu" className="ml-auto">
      <Svg w={14} h={14} v="0 0 14 14"><path d="M0 2.500h14M0 7h14M0 11.500h14" stroke="#c8c8c8" strokeWidth="2" /></Svg>
    </button>
  </div>
);

const TableStatus = () => (
  <div className="h-[22px] shrink-0 overflow-hidden bg-[#333] text-[11px] text-[#dedede]">
    <div className="flex h-7 items-center pl-px">
      <button type="button" aria-label="Show all records" className="flex h-7 w-8 items-center justify-center border border-[#1c4164] bg-[#4c4f58]"><RowsIcon kind="all" /></button>
      <button type="button" aria-label="Show selected records" className="ml-[10px] h-5"><RowsIcon kind="selected" /></button>
      <button type="button" aria-label="First record" className="ml-[17px]"><Svg w={10} h={10} v="0 0 10 10"><path d="M1 0v10" stroke="#686868" /><path d="M9 1v8L3 5z" fill="#686868" /></Svg></button>
      <button type="button" aria-label="Last record" className="ml-[13px]"><Svg w={10} h={10} v="0 0 10 10"><path d="M9 0v10" stroke="#686868" /><path d="M1 1v8l6-4z" fill="#686868" /></Svg></button>
      <span className="ml-3">0 of 0 selected</span>
      <span className="mr-1 ml-auto">Filters:</span>
      <span className="flex h-5 w-[42px] items-center justify-center gap-1.5 bg-[#353940]">
        <Svg w={14} h={14} v="0 0 42 42"><circle cx="21" cy="21" r="18" stroke="#405b52" strokeWidth="5" /><path d="M21 9v13h9" stroke="#40627c" strokeWidth="3" /></Svg>
        <Svg w={14} h={14} v="0 0 42 42"><circle cx="23" cy="23" r="15" stroke="#40627c" strokeWidth="3" /><path d="M2 8h36M10 2v12M24 2v12M23 16v20M14 26h20" stroke="#4b6158" strokeWidth="3" /></Svg>
      </span>
      <button type="button" aria-label="Filter by extent" className="ml-[3px]">
        <Svg w={17} h={16} v="0 0 51 48">
          <path d="M2 3h36L26 18v26l-8-8V18z" fill="#777" stroke="#bbb" strokeWidth="3" />
          <path d="M26 24h22v22H26z" fill="#333" stroke="#3d97dc" strokeWidth="4" strokeDasharray="4 3" />
        </Svg>
      </button>
      <span className="ml-px"><Sep /></span>
      <Svg w={10} h={16} v="0 0 30 48" className="ml-[7px]">
        <path d="M15 4v20M5 14 15 4l10 10" stroke="#467a40" strokeWidth="5" />
        <path d="M15 44V24M5 34l10 10 10-10" stroke="#a8642c" strokeWidth="5" />
      </Svg>
      <button type="button" aria-label="Zoom out" className="ml-[15px] flex"><i className="h-0.5 w-1.5 bg-[#c0c0c0]" /></button>
      <input
        type="range"
        aria-label="Table zoom"
        defaultValue={50}
        className="mx-2 h-3 w-[100px] appearance-none bg-transparent [&::-webkit-slider-runnable-track]:h-[3px] [&::-webkit-slider-runnable-track]:bg-[linear-gradient(90deg,#777_50%,#4b4b4b_50%)] [&::-webkit-slider-thumb]:-mt-1 [&::-webkit-slider-thumb]:h-[11px] [&::-webkit-slider-thumb]:w-[3px] [&::-webkit-slider-thumb]:appearance-none [&::-webkit-slider-thumb]:bg-[#888]"
      />
      <button type="button" aria-label="Zoom in"><Svg w={8} h={8} v="0 0 8 8"><path d="M4 0v8M0 4h8" stroke="#c0c0c0" strokeWidth="2" /></Svg></button>
      <span className="ml-[7px] flex h-5 w-[60px] items-center bg-[#232323] pr-[5px]">
        <select aria-label="Zoom level" className="min-w-0 flex-1 appearance-none bg-transparent pl-1.5 outline-none"><option>100%</option></select>
        <Svg w={5} h={3} v="0 0 6 4"><path d="M0 0h6L3 3.500z" fill="#bbb" /></Svg>
      </span>
      <span className="mr-[7px] ml-[6px]"><Sep /></span>
      <button type="button" aria-label="Refresh table" className="mr-1.5"><Refresh /></button>
    </div>
  </div>
);

const AttributeTable = () => (
  <section className="flex min-h-0 flex-1 flex-col">
    <div className="flex h-[22px] shrink-0 items-stretch text-[11px] text-[#ececec]">
      <button type="button" className="flex w-[124px] items-center gap-1.5 pl-1.5"><TableIcon />boundary.csv</button>
      <span className="flex w-[107px] items-center gap-1.5 rounded-t-[3px] bg-[#0a70ba] pl-1.5">
        <TableIcon />
        <button type="button" className="text-white">point_elev</button>
        <button type="button" aria-label="Close point_elev" className="ml-1"><Cross color="#fff" /></button>
      </span>
      <button type="button" aria-label="Table list" className="mr-1 ml-auto"><WideChevron /></button>
    </div>
    <div className="flex min-h-0 flex-1 flex-col border-t-2 border-r border-l border-t-[#0a70ba] border-r-[#5a5b66] border-l-[#5a5b66] bg-[#2b2b2b]">
      <TableToolbar />
      <div className="mx-px flex min-h-0 flex-1 flex-col border border-[#5e5e62] bg-[#232323]">
        <div className="flex min-h-0 flex-1 justify-between">
          <table className="h-12 w-[209px] border-collapse text-left text-[11px] text-[#dedede]">
            <thead>
              <tr className="h-6 bg-[#474747]">
                <th className="w-[14px] border-r border-b border-[#5c5c5c] bg-[#2f2f2f] p-0 pl-0.5 align-bottom">
                  <Svg w={10} h={10} v="0 0 10 10" className="mb-1"><path d="M10 0v10H0z" fill="#626262" /></Svg>
                </th>
                <th className="w-12 border-r border-b border-[#5c5c5c] p-0 pl-1 font-bold">FID</th>
                <th className="w-[62px] border-r border-b border-[#5c5c5c] p-0 pl-1 font-bold">Shape</th>
                <th className="border-b border-[#5c5c5c] p-0 pl-1 font-bold">Id</th>
              </tr>
            </thead>
            <tbody>
              <tr className="h-6">
                <td className="border-r border-[#5c5c5c] bg-[#474747] p-0" />
                <td colSpan={3} className="border border-[#747474] p-0 pl-1">Click to add new row.</td>
              </tr>
            </tbody>
          </table>
          <div className="flex w-[18px] flex-col items-center justify-between bg-[#292929] py-1">
            <span className="rotate-180"><WideChevron color="#4d4d4d" /></span>
            <WideChevron color="#4d4d4d" />
          </div>
        </div>
        <div className="flex h-[18px] items-center justify-between bg-[#292929] pr-[21px] pl-1">
          <span className="rotate-90"><WideChevron color="#4d4d4d" /></span>
          <span className="-rotate-90"><WideChevron color="#4d4d4d" /></span>
        </div>
      </div>
      <TableStatus />
    </div>
  </section>
);

export default function App() {
  return (
    <div className="flex h-screen flex-col overflow-hidden bg-[#232323] font-['Noto_Sans','Open_Sans',sans-serif]">
      <div className="shrink-0 bg-[#333]">
        <TitleBar />
        <RibbonTabs />
        <Ribbon />
      </div>
      <main className="mt-[7px] flex min-h-0 flex-1">
        <ContentsPane />
        <div className="mr-0.5 ml-1.5 flex min-w-0 flex-1 flex-col">
          <section className="shrink-0">
            <div className="flex h-[22px] items-stretch text-[11px] text-[#ececec]">
              <span className="flex w-[77px] items-center gap-[5px] rounded-t-[3px] bg-[#54575f] pl-1.5">
                <MapThumb />
                <button type="button">Map</button>
                <button type="button" aria-label="Close Map" className="ml-[5px]"><Cross /></button>
              </span>
              <button type="button" aria-label="View list" className="mr-1 ml-auto"><WideChevron /></button>
            </div>
            <div className="border border-t-[3px] border-[#54575f]">
              <MapView />
              <MapStatus />
            </div>
          </section>
          <div className="h-1.5 shrink-0" />
          <AttributeTable />
        </div>
      </main>
    </div>
  );
}
